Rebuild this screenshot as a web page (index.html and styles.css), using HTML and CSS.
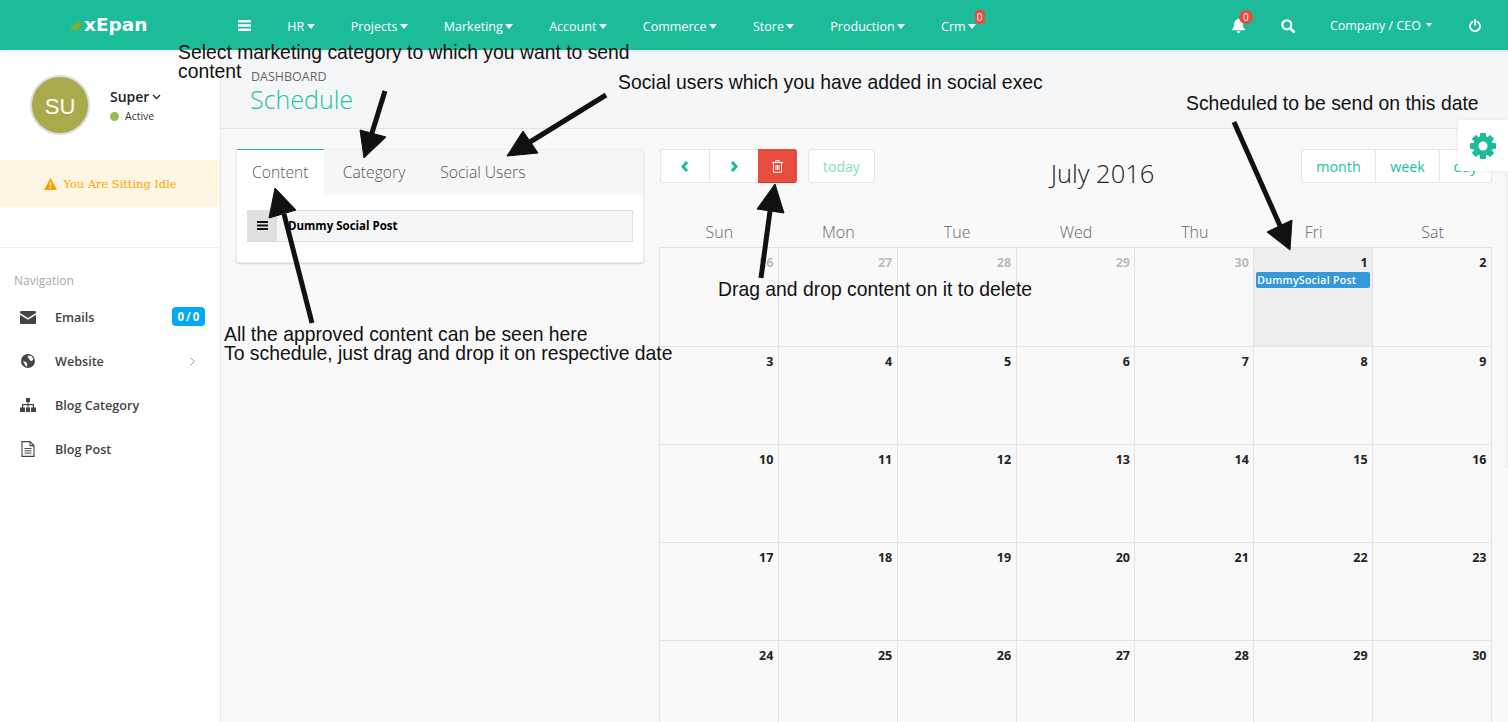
FILE: index.html
```html
<!DOCTYPE html>
<html lang="en">
<head>
<meta charset="utf-8">
<title>Schedule</title>
<link rel="stylesheet" href="styles.css">
</head>
<body>
<header class="topbar">
  <div class="logo">
    <svg class="leaf" width="13" height="11" viewBox="0 0 14 12"><path d="M0 12C1 5 6 1 13 1 13 7 8 11 2 10Z" fill="#7fae2e"/></svg>
    <span>xEpan</span>
  </div>
  <svg class="burger" width="13" height="11" viewBox="0 0 13 11"><path d="M0 0h13v2.400H0zM0 4.300h13v2.400H0zM0 8.600h13V11H0z" fill="#fff"/></svg>
  <nav class="menu">
    <a class="menu-item">HR<i class="caret"></i></a>
    <a class="menu-item">Projects<i class="caret"></i></a>
    <a class="menu-item">Marketing<i class="caret"></i></a>
    <a class="menu-item">Account<i class="caret"></i></a>
    <a class="menu-item">Commerce<i class="caret"></i></a>
    <a class="menu-item">Store<i class="caret"></i></a>
    <a class="menu-item">Production<i class="caret"></i></a>
    <a class="menu-item crm">Crm<i class="caret"></i><b class="crm-badge">0</b></a>
  </nav>
  <div class="top-right">
    <span class="bell">
      <svg width="15" height="15" viewBox="0 0 16 16"><path d="M8 0.500c.7 0 1.100.5 1.100 1.100 2.300.5 3.600 2.400 3.600 4.800 0 3.400 1 4.600 2.300 5.800v.8H1v-.8c1.300-1.200 2.300-2.400 2.300-5.800 0-2.400 1.300-4.300 3.600-4.800C6.900 1 7.300.5 8 .5zM6 14h4a2 2 0 0 1-4 0z" fill="#fff"/></svg>
      <b class="bell-badge">0</b>
    </span>
    <svg class="search" width="14" height="14" viewBox="0 0 14 14"><circle cx="5.800" cy="5.800" r="4.500" fill="none" stroke="#fff" stroke-width="2.200"/><path d="M9 9l4 4" stroke="#fff" stroke-width="2.500" stroke-linecap="round"/></svg>
    <span class="company">Company / CEO<i class="caret small"></i></span>
    <svg class="power" width="12" height="13" viewBox="0 0 12 13"><path d="M3.500 2.800a5 5 0 1 0 5 0" fill="none" stroke="#fff" stroke-width="1.800" stroke-linecap="round"/><path d="M6 .9v5" stroke="#fff" stroke-width="1.800" stroke-linecap="round"/></svg>
  </div>
</header>

<div class="layout">
  <aside class="sidebar">
    <div class="profile">
      <div class="avatar">SU</div>
      <div class="who">
        <div class="who-name">Super<svg width="9" height="6" viewBox="0 0 9 6"><path d="M1 1l3.500 3.500L8 1" fill="none" stroke="#222" stroke-width="1.300"/></svg></div>
        <div class="who-status"><i class="dot"></i>Active</div>
      </div>
    </div>
    <div class="idle">
      <svg width="13" height="12" viewBox="0 0 13 12"><path d="M6.500 0L13 12H0Z" fill="#ff9d00"/><path d="M6.500 4v4M6.500 9.200v1.300" stroke="#fdf6e3" stroke-width="1.300"/></svg>
      <span>You Are Sitting Idle</span>
    </div>
    <div class="nav-title">Navigation</div>
    <ul class="nav">
      <li class="nav-item">
        <svg class="nav-icon" width="16" height="13" viewBox="0 0 16 13"><path d="M1.300 0h13.400C15.400 0 16 .6 16 1.300v.7L8 7 0 2v-.7C0 .6.600 0 1.300 0z" fill="#444"/><path d="M0 3.800l8 5 8-5v7.900c0 .7-.6 1.300-1.300 1.300H1.300C.6 13 0 12.400 0 11.700z" fill="#444"/></svg>
        <span class="nav-label">Emails</span><span class="nav-badge">0 / 0</span>
      </li>
      <li class="nav-item">
        <svg class="nav-icon" width="16" height="14" viewBox="0 0 14 14"><circle cx="7" cy="7" r="7" fill="#444"/><path d="M7.500 1.500l3 .5 2 3-1.500 2-2-.5-1-2-1.500-1zM2 7l3 1 1.500 2-1 3-1.500-2z" fill="#fff"/></svg>
        <span class="nav-label">Website</span><svg class="chev" width="5" height="9" viewBox="0 0 5 9"><path d="M.7.7l3.500 3.800L.7 8.300" fill="none" stroke="#999" stroke-width="1"/></svg>
      </li>
      <li class="nav-item">
        <svg class="nav-icon" width="16" height="14" viewBox="0 0 16 14"><path d="M6 0h4v4H8.500v2H14v3.500h2V14h-5V9.500h1.800V7.200H8.500v2.300H10V14H6V9.500h1.500V7.200H3.200v2.300H5V14H0V9.500h2V6h5.500V4H6z" fill="#444"/></svg>
        <span class="nav-label">Blog Category</span>
      </li>
      <li class="nav-item">
        <svg class="nav-icon" width="16" height="16" viewBox="0 0 14 16"><path d="M1 .6h8l4 4v10.800H1zM9 .6v4h4" fill="none" stroke="#444" stroke-width="1.100"/><path d="M3.500 7.500h7M3.500 9.800h7M3.500 12.100h7" stroke="#444" stroke-width="1"/></svg>
        <span class="nav-label">Blog Post</span>
      </li>
    </ul>
  </aside>

  <main class="content">
    <div class="page-head">
      <div class="crumb">DASHBOARD</div>
      <h1 class="page-title">Schedule</h1>
    </div>
    <div class="page-body">
      <section class="panel">
        <div class="tabs">
          <a class="tab tab-active">Content</a>
          <a class="tab">Category</a>
          <a class="tab">Social Users</a>
        </div>
        <div class="panel-body">
          <div class="drag-row">
            <span class="handle"><svg width="11" height="9" viewBox="0 0 11 9"><path d="M0 0h11v2H0zM0 3.500h11v2H0zM0 7h11v2H0z" fill="#111"/></svg></span>
            <span class="drag-text">Dummy Social Post</span>
          </div>
        </div>
      </section>

      <section class="calendar">
        <div class="cal-toolbar">
          <div class="btn-group">
            <button class="btn btn-nav"><svg width="8" height="11" viewBox="0 0 8 11"><path d="M6 1L2 5.500 6 10" fill="none" stroke="#1abc9c" stroke-width="3"/></svg></button>
            <button class="btn btn-nav"><svg width="8" height="11" viewBox="0 0 8 11"><path d="M2 1l4 4.500L2 10" fill="none" stroke="#1abc9c" stroke-width="3"/></svg></button>
            <button class="btn btn-trash"><svg width="11" height="13" viewBox="0 0 11 13"><path d="M0 2.500h11M3.700 2.500V.7h3.600v1.800M1.500 2.500v9.800h8V2.500M4 5v5M5.500 5v5M7 5v5" fill="none" stroke="#fff" stroke-width="1"/></svg></button>
          </div>
          <button class="btn btn-today">today</button>
          <h2 class="cal-title">July 2016</h2>
          <div class="btn-group">
            <button class="btn btn-view btn-month">month</button>
            <button class="btn btn-view btn-week">week</button>
            <button class="btn btn-view btn-day">day</button>
          </div>
        </div>
        <div class="cal-days">
          <span>Sun</span><span>Mon</span><span>Tue</span><span>Wed</span><span>Thu</span><span>Fri</span><span>Sat</span>
        </div>
        <div class="cal-grid">
          <div class="cell off">26</div><div class="cell off">27</div><div class="cell off">28</div><div class="cell off">29</div><div class="cell off">30</div>
          <div class="cell today">1<div class="event">DummySocial Post</div></div><div class="cell">2</div>
          <div class="cell">3</div><div class="cell">4</div><div class="cell">5</div><div class="cell">6</div><div class="cell">7</div><div class="cell">8</div><div class="cell">9</div>
          <div class="cell">10</div><div class="cell">11</div><div class="cell">12</div><div class="cell">13</div><div class="cell">14</div><div class="cell">15</div><div class="cell">16</div>
          <div class="cell">17</div><div class="cell">18</div><div class="cell">19</div><div class="cell">20</div><div class="cell">21</div><div class="cell">22</div><div class="cell">23</div>
          <div class="cell">24</div><div class="cell">25</div><div class="cell">26</div><div class="cell">27</div><div class="cell">28</div><div class="cell">29</div><div class="cell">30</div>
        </div>
      </section>
    </div>
  </main>
</div>

<div class="settings">
  <svg width="28" height="28" viewBox="0 0 28 28">
    <g fill="#1abc9c">
      <rect x="11" y="1" width="6" height="26" rx="1"/>
      <rect x="11" y="1" width="6" height="26" rx="1" transform="rotate(45 14 14)"/>
      <rect x="11" y="1" width="6" height="26" rx="1" transform="rotate(90 14 14)"/>
      <rect x="11" y="1" width="6" height="26" rx="1" transform="rotate(135 14 14)"/>
      <circle cx="14" cy="14" r="10"/>
    </g>
    <circle cx="14" cy="14" r="4.500" fill="#fff"/>
  </svg>
</div>
<div class="edge"></div>

<svg class="arrows" width="1508" height="722" viewBox="0 0 1508 722">
  <g fill="#111" stroke="#111">
    <path d="M385 91L371 136" stroke-width="5" fill="none"/>
    <path d="M364 158L360 130 386 137Z" stroke-width="1"/>
    <path d="M606 95L530 142" stroke-width="5" fill="none"/>
    <path d="M507 156L523 131 538 153Z" stroke-width="1"/>
    <path d="M312 323L284 214" stroke-width="5" fill="none"/>
    <path d="M275 188L269 218 296 210Z" stroke-width="1"/>
    <path d="M761 278L770 211" stroke-width="5" fill="none"/>
    <path d="M775 184L757 209 784 213Z" stroke-width="1"/>
    <path d="M1234 122L1281 228" stroke-width="5" fill="none"/>
    <path d="M1290 250L1267 232 1292 220Z" stroke-width="1"/>
  </g>
</svg>
<div class="note note-market">Select marketing category to which you want to send<br>content</div>
<div class="note note-social">Social users which you have added in social exec</div>
<div class="note note-date">Scheduled to be send on this date</div>
<div class="note note-delete">Drag and drop content on it to delete</div>
<div class="note note-approved">All the approved content can be seen here<br>To schedule, just drag and drop it on respective date</div>
</body>
</html>
```

FILE: styles.css
```css
* { box-sizing: border-box; }
html, body { margin: 0; height: 722px; overflow: hidden; }
body { font-family: "Open Sans", sans-serif; background: #f9f9f9; color: #444; position: relative; }
ul { list-style: none; margin: 0; padding: 0; }
h1, h2 { margin: 0; font-weight: 300; }
button { font-family: inherit; cursor: pointer; }

.topbar { height: 50px; background: #1cbc9b; display: flex; align-items: center; color: #fff; font-size: 12.500px; box-shadow: 0 1px 3px rgba(0,0,0,.1); position: relative; }
.logo { width: 238px; padding: 0 0 2px 70px; display: flex; align-items: center; gap: 1px; font: bold 18.500px "DejaVu Sans", sans-serif; }
.logo .leaf { margin-top: 4px; }
.burger { flex: none; }
.menu { display: flex; margin-left: 18.300px; padding-top: 2px; }
.menu-item { padding: 0 17.980px; display: flex; align-items: center; position: relative; white-space: nowrap; }
.caret { display: inline-block; width: 0; height: 0; border: 4.500px solid transparent; border-top: 5px solid #fff; border-bottom: 0; margin-left: 2.500px; }
.caret.small { border-width: 3.500px; border-top-width: 4px; border-bottom: 0; margin-left: 5px; }
.crm-badge { position: absolute; left: 51.500px; top: -8px; background: #e74c3c; color: #fff; font-weight: 400; font-size: 10px; width: 10px; height: 14px; line-height: 14px; text-align: center; border-radius: 4px; }
.top-right { margin-left: auto; display: flex; align-items: center; padding-right: 27px; }
.bell { position: relative; display: flex; margin: 1px 35px 0 0; }
.bell-badge { position: absolute; left: 8px; top: -8px; width: 14px; height: 14px; line-height: 14px; border-radius: 50%; background: #e74c3c; font-size: 10px; font-weight: 400; text-align: center; }
.search { margin: 2px 35px 0 0; }
.company { font-size: 12.500px; margin-right: 37px; display: flex; align-items: center; }
.power { margin-top: 1px; }

.layout { display: flex; height: 672px; }
.sidebar { width: 221px; flex: none; background: #fff; border-right: 1px solid #e6e8eb; }
.profile { height: 110px; display: flex; padding: 25px 0 0 30px; }
.avatar { width: 60px; height: 60px; border-radius: 50%; background: #a8aa4b; border: 2px solid #ddd; color: #fff; font: 22px/60px "Liberation Sans", sans-serif; text-align: center; }
.who { margin-left: 20px; padding-top: 12px; }
.who-name { font-size: 14px; font-weight: 600; color: #222; line-height: 20px; display: flex; align-items: center; gap: 3px; }
.who-status { font-size: 10.500px; color: #333; line-height: 18px; display: flex; align-items: center; gap: 6px; }
.dot { width: 9px; height: 9px; border-radius: 50%; background: #8cc152; }
.idle { height: 47px; background: #fdf6e3; display: flex; align-items: center; justify-content: center; gap: 6px; color: #ffa500; font: 11.400px "DejaVu Serif", serif; padding-left: 1px; }
.nav-title { margin-top: 40px; border-top: 1px solid #eee; padding: 25px 0 0 14px; font-size: 12px; line-height: 16px; color: #aaa; }
.nav { margin-top: 6px; }
.nav-item { height: 44px; display: flex; align-items: center; padding: 0 15px 0 20px; font-size: 12.600px; font-weight: 600; color: #444; }
.nav-icon { flex: none; }
.nav-label { margin-left: 19px; flex: 1; }
.nav-badge { background: #03a9f4; color: #fff; font-size: 11.500px; font-weight: 700; border-radius: 4px; width: 33px; height: 19px; line-height: 19px; text-align: center; word-spacing: -1px; margin-bottom: 1px; }
.chev { margin-right: 10px; }

.content { flex: 1; min-width: 0; }
.page-head { height: 79px; background: #f5f6f8; border-bottom: 1px solid #e1e5ea; padding: 19px 0 0 30px; }
.crumb { font-size: 12.500px; line-height: 16px; color: #666; }
.page-title { font-size: 25px; line-height: 30px; color: #1cc3a2; margin: -1px 0 0 -1px; }
.page-body { display: flex; gap: 15px; padding: 20px 16px 0 15px; align-items: flex-start; }

.panel { width: 408px; flex: none; background: #fff; border: 1px solid #eee; border-radius: 3px; box-shadow: 0 1px 2px rgba(0,0,0,.16); height: 114px; }
.tabs { display: flex; height: 44px; background: #f7f7f7; }
.tab { height: 44px; line-height: 44px; font-size: 15.700px; font-weight: 300; color: #555; padding: 0 17.400px; }
.tab-active { background: #fff; border-top: 1px solid #1cbc9b; margin-top: -1px; height: 45px; padding: 0 15px; margin-right: 1.800px; }
.panel-body { padding: 16px 10px; }
.drag-row { height: 32px; display: flex; align-items: stretch; background: #f5f6f8; border: 1px solid #ddd; border-left: 0; }
.handle { width: 30px; background: #e0e0e0; display: flex; align-items: center; justify-content: center; margin-top: -1px; }
.drag-text { margin-left: 11px; font-size: 11.500px; font-weight: 700; color: #000; line-height: 29px; }

.calendar { flex: 1; min-width: 0; }
.cal-toolbar { display: flex; height: 34px; align-items: flex-start; padding-left: 1px; }
.btn-group { display: flex; }
.btn { height: 34px; background: #fff; border: 1px solid #e6e6e6; padding: 0; display: flex; align-items: center; justify-content: center; }
.btn-nav { width: 49px; border-right: 0; }
.btn-nav:first-child { border-radius: 3px 0 0 3px; }
.btn-trash { width: 39px; background: #e74c3c; border: 1px solid #e74c3c; border-bottom-color: #d33a2a; border-radius: 0 3px 3px 0; }
.btn-today { width: 67px; margin-left: 11px; border-radius: 3px; font-size: 14px; color: #8ddcca; padding-top: 1px; }
.cal-title { flex: 1; text-align: center; font-size: 25.500px; line-height: 48px; color: #222; padding-left: 29px; }
.btn-view { font-size: 14.300px; color: #1cc3a2; border-right: 0; padding-top: 1px; }
.btn-month { width: 74px; border-radius: 3px 0 0 3px; }
.btn-week { width: 64px; }
.btn-day { width: 53px; border-right: 1px solid #e6e6e6; border-radius: 0 3px 3px 0; }
.cal-days { display: grid; grid-template-columns: repeat(7, 1fr); height: 64px; padding: 38px 0 0 1px; font-size: 16px; font-weight: 300; line-height: 22px; text-align: center; color: #666; }
.cal-grid { display: grid; grid-template-columns: repeat(7, 1fr); grid-template-rows: 99px; grid-auto-rows: 98px; border-top: 1px solid #e3e3e3; border-left: 1px solid #e3e3e3; }
.cell { border-right: 1px solid #e3e3e3; border-bottom: 1px solid #e3e3e3; padding: 5px 4.500px 0 2px; text-align: right; font-size: 12.500px; font-weight: 700; line-height: 19px; color: #222; }
.cell.off { color: #bbb; }
.cell.today { background: #eee; }
.event { margin-right: -2.500px; height: 16px; background: #3498db; border-radius: 2px; color: #fff; font-size: 10.500px; font-weight: 600; line-height: 17px; text-align: left; padding-left: 1px; letter-spacing: .3px; }

.settings { position: absolute; left: 1458px; top: 120px; width: 50px; height: 51px; background: #fff; border-radius: 3px 0 0 3px; box-shadow: 0 0 4px rgba(0,0,0,.08); display: flex; align-items: center; justify-content: center; padding-right: 1px; }
.edge { position: absolute; right: 0; top: 171px; width: 3px; height: 297px; background: #f1f1f1; }
.arrows { position: absolute; left: 0; top: 0; pointer-events: none; }
.note { position: absolute; font: 19.350px/19px "Liberation Sans", sans-serif; color: #111; white-space: nowrap; }
.note-market { left: 178px; top: 43px; }
.note-social { left: 618px; top: 73px; }
.note-date { left: 1186px; top: 94px; }
.note-delete { left: 718px; top: 280px; }
.note-approved { left: 224px; top: 325px; }
```
